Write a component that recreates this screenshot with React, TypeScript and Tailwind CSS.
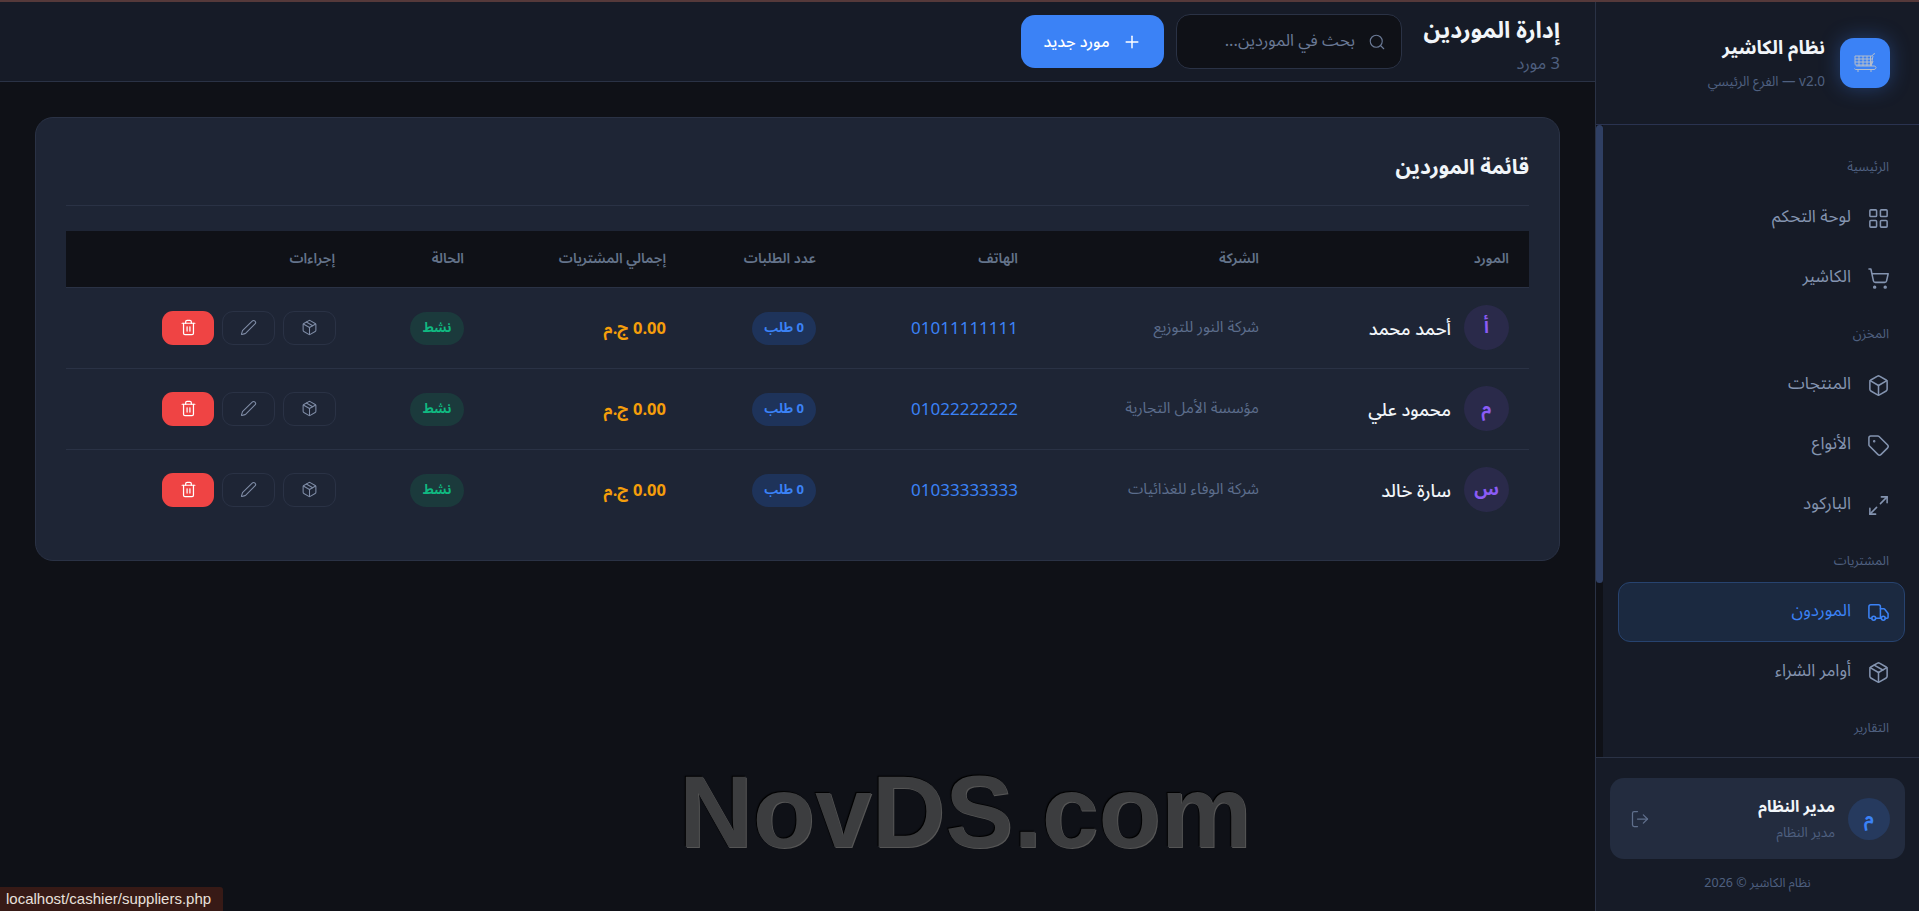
import { useState } from "react";
import { LayoutGrid, ShoppingCart, Box, Package, Tag, Maximize2, Truck, LogOut, Search, Plus, Trash2, Pen } from "lucide-react";

const font = "font-['Noto_Sans_Arabic','Noto_Kufi_Arabic','Cairo','Noto_Sans','DejaVu_Sans',sans-serif]";

function Logo() {
  return (
    <svg width="23" height="21" viewBox="0 0 23 21" fill="none" stroke="#b4bdcc" strokeWidth="1">
      <path d="M1 3h17l1-1.500 2-1M1 3v7c0 2 1 3 2 3h14l2-10M1 6h17.500M1 9h17M2 12h15.500M5 3v10M9 3v10M13 3v10M16.500 3v10" />
      <path d="M19 8l-2 5h3c1.500 0 2 1 2 1.500s-.5 2-2 2H2c-1 0-1.500-.5-1.500-1" />
      <path d="M4 17v2M17 17v2" />
    </svg>
  );
}

function NavLabel({ children }: { children: string }) {
  return <div className="h-[47px] pr-[30px] pt-[16px] text-[13px] leading-[20px] text-[#4f6080]">{children}</div>;
}

function NavItem({ icon: Icon, label, active }: { icon: typeof Box; label: string; active?: boolean }) {
  return (
    <div className={`ml-[14px] mr-[14px] flex h-[60px] items-center gap-[16px] rounded-[12px] border pr-[14px] text-[17px] ${active ? "border-[#27436f] bg-[#1b2940] text-[#3b82f6]" : "border-transparent text-[#8494b0]"}`}>
      <Icon size={23} strokeWidth={1.6} />
      <span>{label}</span>
    </div>
  );
}

const rows = [
  { a: "أ", name: "أحمد محمد", co: "شركة النور للتوزيع", phone: "01011111111" },
  { a: "م", name: "محمود علي", co: "مؤسسة الأمل التجارية", phone: "01022222222" },
  { a: "س", name: "سارة خالد", co: "شركة الوفاء للغذائيات", phone: "01033333333" },
];

export default function App() {
  const [q, setQ] = useState("");
  return (
    <div dir="rtl" className={`${font} relative flex h-[911px] w-full overflow-hidden border-t-2 border-[#55393a] bg-[#0f1117]`}>
      <aside className="flex w-[324px] shrink-0 flex-col border-l border-[#2a3245] bg-[#161b27]">
        <div className="flex h-[123px] shrink-0 items-center gap-[15px] border-b border-[#2a3350] pr-[29px]">
          <div className="flex h-[50px] w-[50px] items-center justify-center rounded-[14px] bg-[#3b82f6] shadow-[0_0_20px_rgba(59,130,246,0.35)]">
            <Logo />
          </div>
          <div>
            <div className="text-[19px] font-bold leading-[28px] text-[#f1f5f9]">نظام الكاشير</div>
            <div className="mt-[10px] text-[13.5px] leading-[20px] text-[#4f6080]">v2.0 — الفرع الرئيسي</div>
          </div>
        </div>
        <div className="relative h-[632px] shrink-0">
          <nav className="h-full overflow-hidden pl-[8px] pt-[16px]">
            <NavLabel>الرئيسية</NavLabel>
            <NavItem icon={LayoutGrid} label="لوحة التحكم" />
            <NavItem icon={ShoppingCart} label="الكاشير" />
            <NavLabel>المخزن</NavLabel>
            <NavItem icon={Box} label="المنتجات" />
            <NavItem icon={Tag} label="الأنواع" />
            <NavItem icon={Maximize2} label="الباركود" />
            <NavLabel>المشتريات</NavLabel>
            <NavItem icon={Truck} label="الموردون" active />
            <NavItem icon={Package} label="أوامر الشراء" />
            <NavLabel>التقارير</NavLabel>
          </nav>
          <div className="absolute inset-y-0 left-0 w-[7px] bg-[#0f1117]">
            <div className="h-[458px] rounded-[4px] bg-[#2f3f63]" />
          </div>
        </div>
        <div className="flex-1 border-t border-[#2a3245] px-[14px] pt-[20px]">
          <div className="flex h-[81px] items-center gap-[13px] rounded-[14px] bg-[#232c3f] pl-[20px] pr-[15px]">
            <div className="flex h-[42px] w-[42px] items-center justify-center rounded-full bg-[#263a5e] text-[18px] font-bold text-[#3b82f6]">م</div>
            <div className="flex-1">
              <div className="text-[16px] font-bold leading-[24px] text-[#f1f5f9]">مدير النظام</div>
              <div className="mt-[4px] text-[13.5px] leading-[20px] text-[#4f6080]">مدير النظام</div>
            </div>
            <LogOut size={20} strokeWidth={1.5} className="text-[#5f6f8c]" />
          </div>
          <div className="mt-[14px] text-center text-[12.5px] leading-[20px] text-[#4f6080]">نظام الكاشير © 2026</div>
        </div>
      </aside>

      <main className="flex min-w-0 flex-1 flex-col">
        <header className="flex h-[80px] shrink-0 items-center gap-[20px] border-b border-[#2a3245] bg-[#161b27] px-[35px]">
          <div className="w-[138px] pt-[6px]">
            <div className="whitespace-nowrap text-[23px] font-bold leading-[30px] text-[#f1f5f9]">إدارة الموردين</div>
            <div className="mt-[8px] text-[16.5px] leading-[20px] text-[#4f6080]">3 مورد</div>
          </div>
          <div className="flex items-center gap-[12px]">
            <div className="flex h-[55px] w-[226px] items-center gap-[13px] rounded-[14px] border border-[#2a3245] bg-[#0f1117] px-[15px]">
              <Search size={18} strokeWidth={1.5} className="shrink-0 text-[#6b7a96]" />
              <input value={q} onChange={(e) => setQ(e.target.value)} placeholder="بحث في الموردين..." className="w-full bg-transparent text-[16.5px] text-[#f1f5f9] outline-none placeholder:text-[#6b7a96]" />
            </div>
            <button className="flex h-[53px] w-[143px] items-center justify-center gap-[12px] rounded-[14px] bg-[#3b82f6] text-[16px] font-medium text-white">
              <Plus size={20} strokeWidth={1.75} />
              <span>مورد جديد</span>
            </button>
          </div>
        </header>
        <div className="flex-1 p-[35px]">
          <section className="rounded-[18px] border border-[#2a3245] bg-[#1e2535] p-[30px]">
            <h2 className="h-[58px] border-b border-[#2a3245] text-[21px] font-bold leading-[38px] text-[#f1f5f9]">قائمة الموردين</h2>
            <table className="mt-[25px] w-full table-fixed border-collapse text-right">
              <thead>
                <tr className="h-[56px] border-b border-[#2a3245] bg-[#0f1117] text-[14px] text-[#64748b]">
                  <th className="w-[250px] pr-[20px] font-semibold">المورد</th>
                  <th className="w-[241px] pr-[20px] font-semibold">الشركة</th>
                  <th className="w-[202px] pr-[20px] font-semibold">الهاتف</th>
                  <th className="w-[150px] pr-[20px] font-semibold">عدد الطلبات</th>
                  <th className="w-[202px] pr-[20px] font-semibold">إجمالي المشتريات</th>
                  <th className="w-[129px] pr-[20px] font-semibold">الحالة</th>
                  <th className="pr-[20px] font-semibold">إجراءات</th>
                </tr>
              </thead>
              <tbody>
                {rows.map((r, i) => (
                  <tr key={r.phone} className={`h-[81px] ${i < 2 ? "border-b border-[#2a3245]" : ""}`}>
                    <td className="pr-[20px]">
                      <div className="flex items-center gap-[13px]">
                        <div className="flex h-[45px] w-[45px] items-center justify-center rounded-full bg-[#2a2a4a] text-[18px] font-bold text-[#8b5cf6]">{r.a}</div>
                        <span className="pt-[4px] text-[18px] font-medium text-[#f1f5f9]">{r.name}</span>
                      </div>
                    </td>
                    <td className="pr-[20px] text-[15.5px] text-[#5c6d8c]">{r.co}</td>
                    <td className="pr-[20px] pt-[4px] text-[17px] text-[#3b82f6]">{r.phone}</td>
                    <td className="pr-[20px] pt-[2px]">
                      <span className="inline-flex h-[33px] w-[64px] items-center justify-center rounded-full bg-[#1e335a] text-[13px] font-bold text-[#3b82f6]">0 طلب</span>
                    </td>
                    <td className="pr-[20px] pt-[4px] text-[16.5px] font-bold text-[#f59e0b]">0.00 ج.م</td>
                    <td className="pr-[20px] pt-[2px]">
                      <span className="inline-flex h-[33px] w-[54px] items-center justify-center rounded-full bg-[#1b3a3c] text-[13px] font-bold text-[#10b981]">نشط</span>
                    </td>
                    <td className="pr-[19px]">
                      <div className="flex gap-[8px]">
                        <button className="flex h-[34px] w-[53px] items-center justify-center rounded-[11px] border border-[#2a3245] text-[#7f8ca6]"><Package size={17} strokeWidth={1.5} /></button>
                        <button className="flex h-[34px] w-[53px] items-center justify-center rounded-[11px] border border-[#2a3245] text-[#7f8ca6]"><Pen size={17} strokeWidth={1.5} /></button>
                        <button className="flex h-[34px] w-[52px] items-center justify-center rounded-[11px] bg-[#ef4444] text-white"><Trash2 size={17} strokeWidth={1.75} /></button>
                      </div>
                    </td>
                  </tr>
                ))}
              </tbody>
            </table>
          </section>
        </div>
      </main>

      <div dir="ltr" className="absolute left-[679px] top-[753px] font-['Liberation_Sans',sans-serif] text-[102px] font-bold leading-[115px] text-[#3c3d3f] [text-shadow:1px_1px_0_#555,-1px_-1px_1px_#000]">NovDS.com</div>
      <div dir="ltr" className="absolute bottom-0 left-0 flex h-[24px] w-[223px] items-center rounded-tr-[3px] bg-[#371a16] pl-[6px] font-['Liberation_Sans',sans-serif] text-[15px] text-[#e8e0dc]">localhost/cashier/suppliers.php</div>
    </div>
  );
}
